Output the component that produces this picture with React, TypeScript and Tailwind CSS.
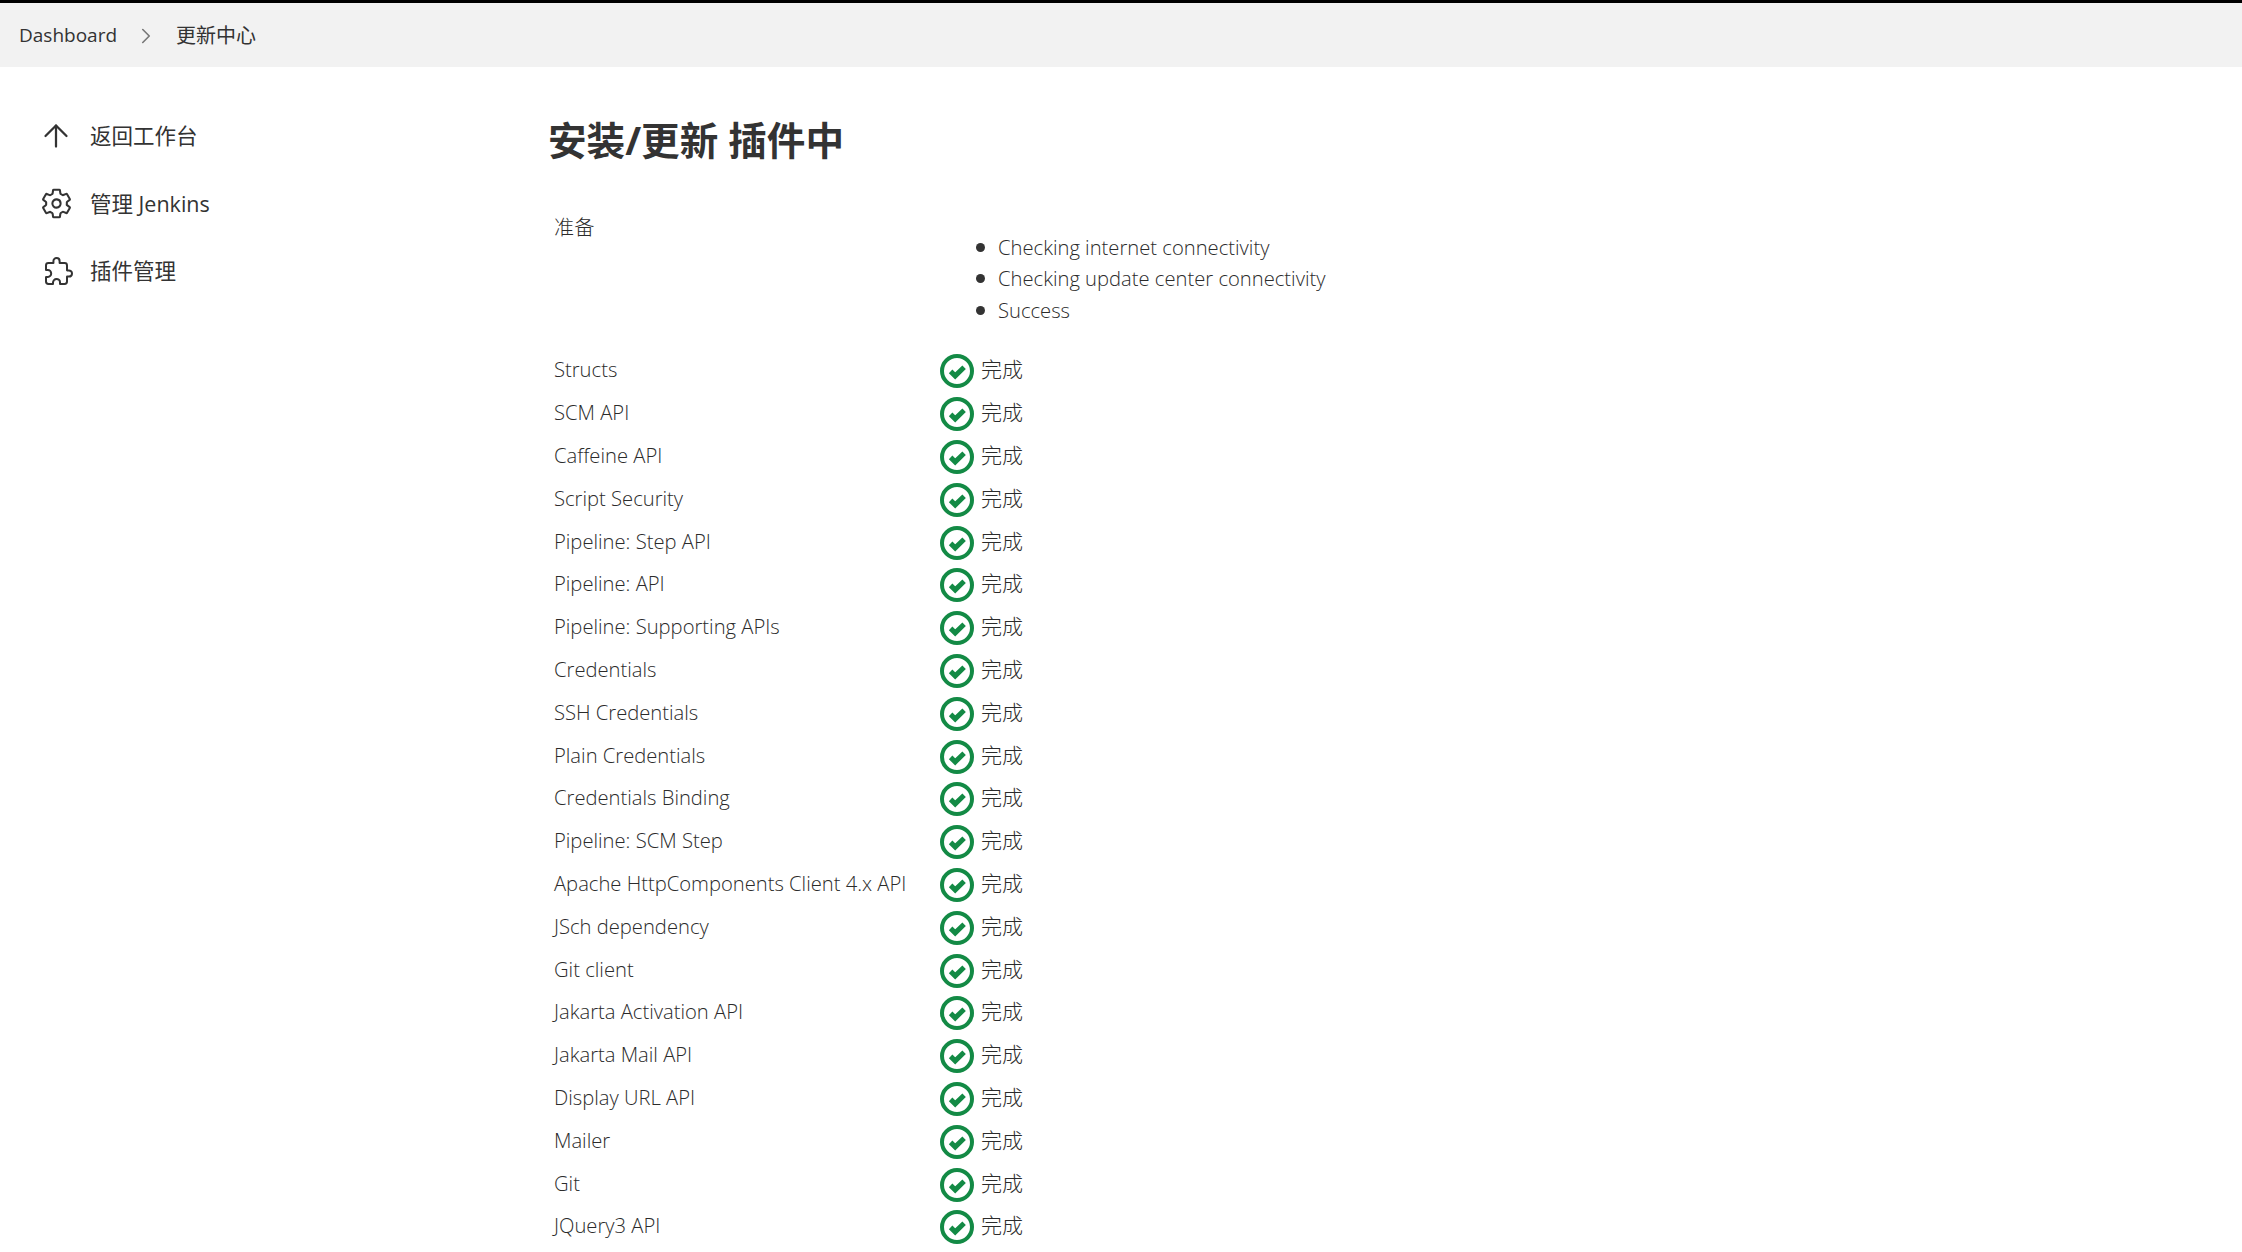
import { ArrowUp, ChevronRight } from "lucide-react";
import { IoExtensionPuzzleOutline, IoSettingsOutline } from "react-icons/io5";

const plugins = [
  "Structs",
  "SCM API",
  "Caffeine API",
  "Script Security",
  "Pipeline: Step API",
  "Pipeline: API",
  "Pipeline: Supporting APIs",
  "Credentials",
  "SSH Credentials",
  "Plain Credentials",
  "Credentials Binding",
  "Pipeline: SCM Step",
  "Apache HttpComponents Client 4.x API",
  "JSch dependency",
  "Git client",
  "Jakarta Activation API",
  "Jakarta Mail API",
  "Display URL API",
  "Mailer",
  "Git",
  "JQuery3 API",
];

const checks = ["Checking internet connectivity", "Checking update center connectivity", "Success"];

function DoneIcon() {
  return (
    <svg viewBox="0 0 34 34" className="h-[34px] w-[34px] shrink-0 translate-y-[2px]" fill="none">
      <circle cx="17" cy="17" r="15" stroke="#138a45" strokeWidth="4" />
      <path d="M10.6 17.4l4.6 4.5 8.9-8.7" stroke="#138a45" strokeWidth="5" />
    </svg>
  );
}

function SideItem({ icon, label }: { icon: React.ReactNode; label: string }) {
  return (
    <div className="flex h-[67.5px] items-center">
      <div className="flex w-[50px] justify-center">{icon}</div>
      <span className="ml-[9px] text-[21.5px] leading-none">{label}</span>
    </div>
  );
}

export default function App() {
  return (
    <div className="h-screen overflow-hidden bg-white font-['Open_Sans','Noto_Sans_CJK_SC',sans-serif] text-[#333]">
      <header className="flex h-[67px] items-center border-t-[3px] border-black bg-[#f2f2f2] pl-[19px] pt-[1px] text-[20px]">
        <span className="text-[19px] font-medium">Dashboard</span>
        <ChevronRight className="ml-[16px] mr-[17px] h-[26px] w-[26px] text-[#777]" strokeWidth={1.5} />
        <span>更新中心</span>
      </header>
      <div className="flex">
        <aside className="w-[548px] shrink-0 pl-[31px] pt-[35px]">
          <SideItem icon={<ArrowUp className="h-[36px] w-[36px]" strokeWidth={1.5} />} label="返回工作台" />
          <SideItem icon={<IoSettingsOutline className="h-[33px] w-[33px]" />} label="管理 Jenkins" />
          <SideItem icon={<IoExtensionPuzzleOutline className="ml-[6px] h-[32px] w-[32px]" />} label="插件管理" />
        </aside>
        <main className="flex-1 pt-[49px]">
          <h1 className="text-[38.6px] font-bold leading-[48px]">安装/更新 插件中</h1>
          <div className="mt-[47.5px] pl-[6px] text-[20.2px] font-light text-[#2b2b2b]">
            <div className="grid grid-cols-[386px_1fr]">
              <div className="leading-[30px]">准备</div>
              <ul className="mt-[20px] pb-[22px] pl-[36px] leading-[31.5px]">
                {checks.map((text) => (
                  <li key={text} className="flex items-center gap-[13px]">
                    <span className="h-[9px] w-[9px] rounded-full bg-[#333]" />
                    {text}
                  </li>
                ))}
              </ul>
            </div>
            {plugins.map((name) => (
              <div key={name} className="grid h-[42.8px] grid-cols-[386px_1fr] items-center leading-[30px]">
                <div className="whitespace-nowrap">{name}</div>
                <div className="flex items-center gap-[7px]">
                  <DoneIcon />
                  <span className="-translate-y-[0.5px] text-[21px]">完成</span>
                </div>
              </div>
            ))}
          </div>
        </main>
      </div>
    </div>
  );
}
